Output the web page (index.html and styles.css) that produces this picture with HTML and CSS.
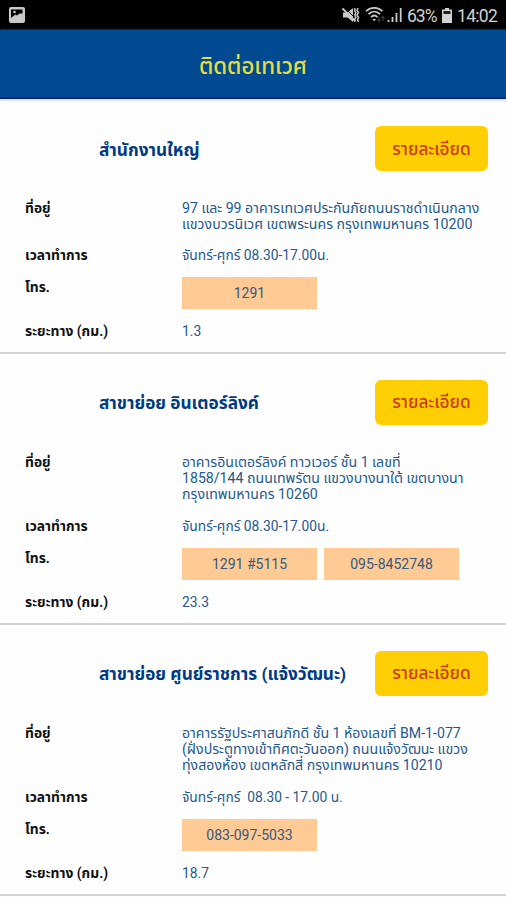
FILE: index.html
```
<!DOCTYPE html>
<html lang="th">

<head>
	<meta charset="utf-8">
	<meta name="viewport" content="width=device-width, initial-scale=1.0">
	<title>ติดต่อเทเวศ</title>
	<link rel="stylesheet" href="styles.css">
</head>

<body>
	<!-- phone status bar -->
	<div class="statusbar">
		<svg class="icon-picture" width="16" height="16" viewBox="0 0 16 16">
			<rect x="0" y="0" width="16" height="16" rx="2" fill="#c9c9c9"/>
			<path d="M2 2.500h11.500v4h-3L8 8.500 6.500 7.500 4.500 9 2 11z" fill="#000"/>
			<circle cx="5.500" cy="5" r="1.300" fill="#c9c9c9"/>
		</svg>
		<div class="status-right">
			<svg class="icon-mute" width="18" height="16" viewBox="0 0 18 16">
				<path d="M1 5.500h4.500L11 1v14l-5.500-4.500H1z" fill="#c9c9c9"/>
				<path d="M3 1L14 12" stroke="#000" stroke-width="1"/>
				<path d="M0.500 1.500L13 14" stroke="#c9c9c9" stroke-width="1.800"/>
				<path d="M12.800 1v3l1 1.500-1 2.500 1 2.500-1 1.500v3M16 1l-1 2.500 1.500 2-1.500 2.500 1.500 2.500-1 2 1 2.500" fill="none" stroke="#c9c9c9" stroke-width="1.500"/>
			</svg>
			<svg class="icon-wifi" width="20" height="16" viewBox="0 0 20 16">
				<path d="M1 4.200c5-4.500 11.500-4.500 16.500 0M3.500 7.200c3.500-3.500 8-3.500 11.500 0M6 10.200c2-2 4.500-2 6.500 0" fill="none" stroke="#c9c9c9" stroke-width="1.800"/>
				<path d="M7.200 12h4l-2 2.300z" fill="#c9c9c9"/>
				<path d="M14 10v4m-1.500-1.500l1.500 2 1.500-2M18 14v-4m-1.500 1.500l1.500-2 1.500 2" fill="none" stroke="#555" stroke-width="0.900"/>
			</svg>
			<svg class="icon-signal" width="16" height="16" viewBox="0 0 16 16">
				<path d="M1.500 13v2M5.500 10v5M9.500 6v9" stroke="#c9c9c9" stroke-width="1.800"/>
				<path d="M13.700 1v14" stroke="#c9c9c9" stroke-width="1.800"/>
			</svg>
			<span class="status-text percent">63%</span>
			<svg class="icon-battery" width="10" height="15" viewBox="0 0 10 15">
				<path d="M3 0h4v1.500h3V15H0V1.500h3z" fill="#d2d2d2"/>
				<rect x="1.500" y="3" width="7" height="3" fill="#222"/>
			</svg>
			<span class="status-text clock">14:02</span>
		</div>
	</div>

	<div class="header"><h1>ติดต่อเทเวศ</h1></div>

	<!-- branches -->
	<div class="branch">
		<div class="branch-head">
			<h2>สำนักงานใหญ่</h2>
			<button class="detail">รายละเอียด</button>
		</div>
		<div class="row address">
			<div class="label">ที่อยู่</div>
			<div class="value">97 และ 99 อาคารเทเวศประกันภัยถนนราชดำเนินกลาง<br>แขวงบวรนิเวศ เขตพระนคร กรุงเทพมหานคร 10200</div>
		</div>
		<div class="row">
			<div class="label">เวลาทำการ</div>
			<div class="value">จันทร์-ศุกร์ 08.30-17.00น.</div>
		</div>
		<div class="row tel">
			<div class="label">โทร.</div>
			<div class="value"><span class="phone">1291</span></div>
		</div>
		<div class="row">
			<div class="label">ระยะทาง (กม.)</div>
			<div class="value">1.3</div>
		</div>
	</div>

	<div class="branch">
		<div class="branch-head">
			<h2>สาขาย่อย อินเตอร์ลิงค์</h2>
			<button class="detail">รายละเอียด</button>
		</div>
		<div class="row address long">
			<div class="label">ที่อยู่</div>
			<div class="value">อาคารอินเตอร์ลิงค์ ทาวเวอร์ ชั้น 1 เลขที่<br>1858/144 ถนนเทพรัตน แขวงบางนาใต้ เขตบางนา<br>กรุงเทพมหานคร 10260</div>
		</div>
		<div class="row">
			<div class="label">เวลาทำการ</div>
			<div class="value">จันทร์-ศุกร์ 08.30-17.00น.</div>
		</div>
		<div class="row tel">
			<div class="label">โทร.</div>
			<div class="value"><span class="phone">1291 #5115</span><span class="phone">095-8452748</span></div>
		</div>
		<div class="row">
			<div class="label">ระยะทาง (กม.)</div>
			<div class="value">23.3</div>
		</div>
	</div>

	<div class="branch">
		<div class="branch-head">
			<h2>สาขาย่อย ศูนย์ราชการ (แจ้งวัฒนะ)</h2>
			<button class="detail">รายละเอียด</button>
		</div>
		<div class="row address long">
			<div class="label">ที่อยู่</div>
			<div class="value">อาคารรัฐประศาสนภักดี ชั้น 1 ห้องเลขที่ BM-1-077<br>(ฝั่งประตูทางเข้าทิศตะวันออก) ถนนแจ้งวัฒนะ แขวง<br>ทุ่งสองห้อง เขตหลักสี่ กรุงเทพมหานคร 10210</div>
		</div>
		<div class="row">
			<div class="label">เวลาทำการ</div>
			<div class="value">จันทร์-ศุกร์&nbsp; 08.30 - 17.00 น.</div>
		</div>
		<div class="row tel">
			<div class="label">โทร.</div>
			<div class="value"><span class="phone">083-097-5033</span></div>
		</div>
		<div class="row">
			<div class="label">ระยะทาง (กม.)</div>
			<div class="value">18.7</div>
		</div>
	</div>
</body>

</html>
```
FILE: styles.css
```
* {
	box-sizing: border-box;
}

body {
	margin: 0;
	height: 900px;
	overflow: hidden;
	background: #fefefe;
	font-family: Roboto, "Noto Sans Thai", "Noto Sans", sans-serif;
}

/* status bar */
.statusbar {
	display: flex;
	justify-content: space-between;
	align-items: center;
	height: 30px;
	padding: 0 9px;
	background: #000;
}

.status-right {
	display: flex;
	align-items: center;
}

.status-text {
	color: #d2d2d2;
	font-size: 17.500px;
	line-height: 30px;
	white-space: nowrap;
}

.icon-wifi {
	margin-left: 5px;
}

.icon-signal {
	margin-left: 2px;
}

.percent {
	width: 30px;
	margin: 2px 0 0 4px;
	letter-spacing: -1px;
}

.icon-battery {
	margin-left: 5px;
}

.clock {
	width: 40px;
	margin: 2px 0 0 5px;
	letter-spacing: -0.700px;
}

/* page title */
.header {
	display: flex;
	justify-content: center;
	align-items: center;
	height: 69px;
	padding-top: 5px;
	background: #004a91;
	border-bottom: 2px solid #00237c;
	box-shadow: 0 1px 3px #c9c9dd;
}

.header h1 {
	margin: 0;
	color: #e6db45;
	font-size: 22.300px;
	font-weight: 500;
	line-height: 30px;
	white-space: nowrap;
}

/* one branch */
.branch {
	padding: 27px 0 12px 25px;
	border-bottom: 2px solid #d3d3d3;
}

.branch + .branch {
	padding-top: 26px;
}

.branch-head {
	display: flex;
	justify-content: space-between;
	align-items: center;
	height: 45px;
	margin: 0 18px 29px 74px;
}

.branch-head h2 {
	margin: 2px 0 0;
	color: #003a83;
	font-size: 17.200px;
	font-weight: 700;
	line-height: 24px;
	white-space: nowrap;
}

.detail {
	flex: none;
	width: 113px;
	height: 45px;
	padding: 2px 0 0;
	border: 0;
	border-radius: 6px;
	background: #ffcf03;
	color: #c83c0c;
	font-family: inherit;
	font-size: 17.300px;
	font-weight: 500;
	white-space: nowrap;
}

.row {
	display: flex;
	margin-bottom: 14px;
	font-size: 13.800px;
	line-height: 16.400px;
	white-space: nowrap;
}

.row:last-child {
	margin-bottom: 0;
}

/* three line address */
.row.long {
	margin-bottom: 15px;
}

.label {
	flex: none;
	width: 157px;
	color: #111;
	font-weight: 700;
}

.value {
	color: #24598c;
}

.address .value {
	font-size: 14.150px;
}

.tel .label {
	padding-top: 2px;
}

.tel .value {
	display: flex;
	gap: 7px;
}

.phone {
	width: 135px;
	height: 32px;
	background: #ffca94;
	color: #36597e;
	font-size: 14px;
	line-height: 33px;
	text-align: center;
}
```
